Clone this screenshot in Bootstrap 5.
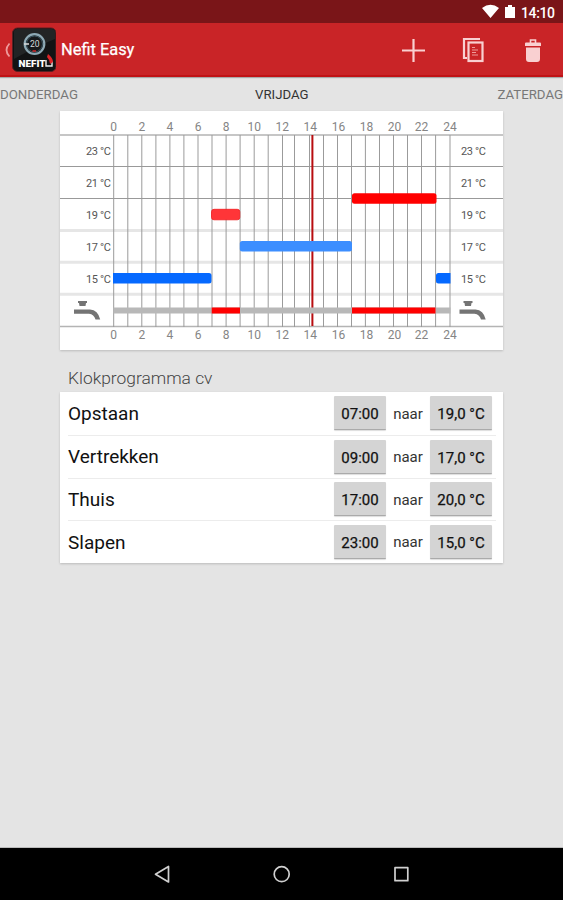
<!DOCTYPE html>
<html lang="nl">
<head>
<meta charset="utf-8">
<meta name="viewport" content="width=device-width, initial-scale=1">
<title>Nefit Easy</title>
<link href="https://cdn.jsdelivr.net/npm/bootstrap@5.3.0/dist/css/bootstrap.min.css" rel="stylesheet">
<style>
body{font-family:Roboto,"Liberation Sans",sans-serif;background:#e4e4e4;height:900px;overflow:hidden;color:#222}
svg{display:block;flex:none}
svg text{font-family:Roboto,"Liberation Sans",sans-serif}
.statusbar{height:23px;background:#7a1518;padding-right:8px}
.appbar{height:54px;background:#c92427;border-bottom:2px solid #c01215;box-shadow:0 1px 1px #aaa;color:#fff}
.app-title{margin-left:5px;font-size:16.4px;line-height:54px;white-space:nowrap;-webkit-text-stroke:.25px #fff}
.days{height:34px}
.panel{width:443px;background:#fff;box-shadow:0 1px 2px #bbb}
.section-title{width:443px;height:42px;padding:16px 0 0 8px;font-size:17.4px;font-weight:300;line-height:24px;color:#444}
.entry{height:42.75px;margin:0 7px 0 8px;font-size:19px;color:#111;padding-right:4px}
.entry .name{padding-top:2px}
.entry+.entry{border-top:1px solid #ececec}
.entry .value{height:34px;background:#d4d4d4;border:0;border-bottom:1px solid #aaa;border-radius:1px;box-shadow:0 1px 1px #ddd;font-size:15px;line-height:34px;text-align:center;padding:1px 0 0;color:#111;-webkit-text-stroke:.25px #111}
.time{width:52px}.temp{width:62px}
.entry .to{width:44px;font-size:15px;text-align:center;color:#333;padding-top:1px}
.navkeys{height:52px;background:#000;box-shadow:0 -1px 0 #bbb}
</style>
<script src="https://cdn.jsdelivr.net/npm/bootstrap@5.3.0/dist/js/bootstrap.bundle.min.js"></script>
</head>
<body class="d-flex flex-column">
<div class="statusbar d-flex justify-content-end align-items-center">
  <svg width="40" height="23" viewBox="0 0 40 23" fill="#fff"><path d="M1 8Q9.500 1.500 18 8L9.500 18ZM24 7h3V5h4v2h3v11H24z"/></svg>
  <svg width="34" height="23" viewBox="0 0 34 23" fill="#fff"><text x="0" y="17.500" font-size="14" font-weight="500" textLength="34">14:10</text></svg>
</div>
<header class="appbar d-flex">
  <svg width="56" height="52" viewBox="0 23 56 52">
    <path d="M9.500 43.500Q3.500 50 9.500 56.500" fill="none" stroke="#ee9a9b" stroke-width="1.800"/>
    <rect x="12.500" y="28" width="43.500" height="43.500" rx="5" fill="#121314" stroke="#5b2023"/>
    <path d="M14 32Q14 29 17 29H52Q55 29 55 32V39Q35 47 14 59Z" fill="#222425"/>
    <circle cx="34.500" cy="44" r="9.800" fill="none" stroke="#8da9b5" stroke-width="2.200"/>
    <circle cx="34.500" cy="44" r="8" fill="#16191b" stroke="#426573" stroke-width=".8"/>
    <path d="M24 44h5" stroke="#ddd" stroke-width="1.500"/><path d="M32.500 51h3.500" stroke="#d3292b" stroke-width="1.500"/>
    <text x="30" y="47" font-size="8.500" fill="#d5dadd" textLength="9.500">20</text>
    <text x="18.500" y="67" font-size="9" font-weight="900" fill="#fff" textLength="27" lengthAdjust="spacingAndGlyphs">NEFIT</text>
    <path d="M46 60v6h6v-5" fill="none" stroke="#eee" stroke-width="1.400"/><path d="M48 54q5 4 5 8l-3 2q0-4-3-7z" fill="#dd2529"/>
  </svg>
  <div class="app-title">Nefit Easy</div>
  <svg class="ms-auto" width="163" height="52" viewBox="400 23 163 52" fill="none" stroke="#f9d0d1">
    <path d="M402 50.500H425M413.500 39V62" stroke-width="2.200"/>
    <path d="M480 39H464V58H467" stroke-width="2.200"/>
    <rect x="468.500" y="42.500" width="14" height="18.500" stroke-width="2.200"/>
    <path d="M472 47.500h3M472 50h6M472 52.500h4M472 55h6" stroke-width="1.100" stroke="#e99"/>
    <path d="M530.500 43v-3h5v3" stroke-width="1.600"/>
    <path d="M525 43.500q0-1 1-1h14q1 0 1 1v2.500h-16zM526 47.500h14V59q0 3-3 3h-8q-3 0-3-3z" fill="#f9d0d1" stroke="none"/>
  </svg>
</header>
<div class="days">
  <svg width="563" height="34" viewBox="0 77 563 34" font-size="12.800" fill="#777">
    <text x="0" y="98.500" textLength="78" lengthAdjust="spacingAndGlyphs">DONDERDAG</text>
    <text x="255" y="98.500" fill="#333" textLength="53.500" lengthAdjust="spacingAndGlyphs">VRIJDAG</text>
    <text x="497.500" y="98.500" textLength="65.500" lengthAdjust="spacingAndGlyphs">ZATERDAG</text>
  </svg>
</div>
<main class="flex-grow-1 d-flex flex-column align-items-center">
  <section class="panel">
    <svg width="443" height="239" viewBox="60 111 443 239">
      <path d="M60 230.500H503M60 262.300H503M60 294.300H503" stroke="#e6e6e6" stroke-width="3"/>
      <path d="M60 135H503M60 326.500H503" stroke="#b4b4b4" stroke-width="1.300"/>
      <path d="M60 166.500H503M60 198.500H503" stroke="#999"/>
      <path d="M113.700 135V327M127.800 135V327M141.800 135V327M155.900 135V327M169.900 135V327M183.900 135V327M198 135V327M212 135V327M226.100 135V327M240.100 135V327M254.200 135V327M268.200 135V327M282.500 135V327M294.500 135V327M309.500 135V327M323.500 135V327M337.500 135V327M351.500 135V327M365.400 135V327M379.500 135V327M393.500 135V327M407.500 135V327M421.500 135V327M435.600 135V327M450 135V327" stroke="#9b9b9b" stroke-width="1"/>
      <path d="M312.400 135V326" stroke="#b80d10" stroke-width="2"/>
      <path d="M113.500 310.500H450.500" stroke="#b8b8b8" stroke-width="6"/>
      <path d="M211.700 310.500H240M352 310.500H435.500" stroke="#f00" stroke-width="6"/>
      <rect x="211.500" y="209.300" width="28.300" height="10.500" rx="2.500" fill="#ff3538" stroke="#f31a1d" stroke-width=".8"/>
      <rect x="352" y="193.300" width="84.500" height="10.500" rx="2.500" fill="#f00"/>
      <rect x="239.800" y="241" width="112.200" height="10.500" rx="2.500" fill="#3c8eff"/>
      <path d="M113 273H209q2.500 0 2.500 2.500v5.500q0 2.500-2.500 2.500H113zM450.500 273H438.500q-2.500 0-2.500 2.500v5.500q0 2.500 2.500 2.500H450.500z" fill="#0569ff"/>
      <g id="tap" fill="#747474"><path d="M74 309.500H90Q98 310 100.200 319.500H95.500Q94 314.500 89 313.800H74z"/><path d="M78 301h9v2h-1l-.5 3h-6l-.5-3h-1z"/></g>
      <use href="#tap" x="385.500"/>
      <g id="hours" font-size="12" fill="#858585" text-anchor="middle">
        <text x="113.700" y="130.500">0</text><text x="141.800" y="130.500">2</text><text x="169.900" y="130.500">4</text><text x="198" y="130.500">6</text><text x="226.100" y="130.500">8</text><text x="254.200" y="130.500">10</text><text x="282.300" y="130.500">12</text><text x="310.300" y="130.500">14</text><text x="338.400" y="130.500">16</text><text x="366.500" y="130.500">18</text><text x="394.500" y="130.500">20</text><text x="421.500" y="130.500">22</text><text x="450" y="130.500">24</text>
      </g>
      <use href="#hours" y="208.500"/>
      <g font-size="11" fill="#555">
        <text x="86" y="155" textLength="25">23 °C</text><text x="86" y="187" textLength="25">21 °C</text><text x="86" y="218.500" textLength="25">19 °C</text><text x="86" y="250.500" textLength="25">17 °C</text><text x="86" y="282.500" textLength="25">15 °C</text>
        <text x="461" y="155" textLength="25">23 °C</text><text x="461" y="187" textLength="25">21 °C</text><text x="461" y="218.500" textLength="25">19 °C</text><text x="461" y="250.500" textLength="25">17 °C</text><text x="461" y="282.500" textLength="25">15 °C</text>
      </g>
    </svg>
  </section>
  <h2 class="section-title mb-0">Klokprogramma cv</h2>
  <section class="panel">
    <div class="entry d-flex align-items-center"><span class="name me-auto">Opstaan</span><button class="value time">07:00</button><span class="to">naar</span><button class="value temp">19,0 °C</button></div>
    <div class="entry d-flex align-items-center"><span class="name me-auto">Vertrekken</span><button class="value time">09:00</button><span class="to">naar</span><button class="value temp">17,0 °C</button></div>
    <div class="entry d-flex align-items-center"><span class="name me-auto">Thuis</span><button class="value time">17:00</button><span class="to">naar</span><button class="value temp">20,0 °C</button></div>
    <div class="entry d-flex align-items-center"><span class="name me-auto">Slapen</span><button class="value time">23:00</button><span class="to">naar</span><button class="value temp">15,0 °C</button></div>
  </section>
</main>
<nav class="navkeys">
  <svg width="563" height="52" viewBox="0 848 563 52" fill="none" stroke="#d0d0d0" stroke-width="1.700" stroke-linejoin="round"><path d="M168.500 866.500V882L155.500 874.200z"/><circle cx="281.700" cy="874.200" r="7.500"/><rect x="395" y="867.700" width="12.800" height="13"/></svg>
</nav>
</body>
</html>
